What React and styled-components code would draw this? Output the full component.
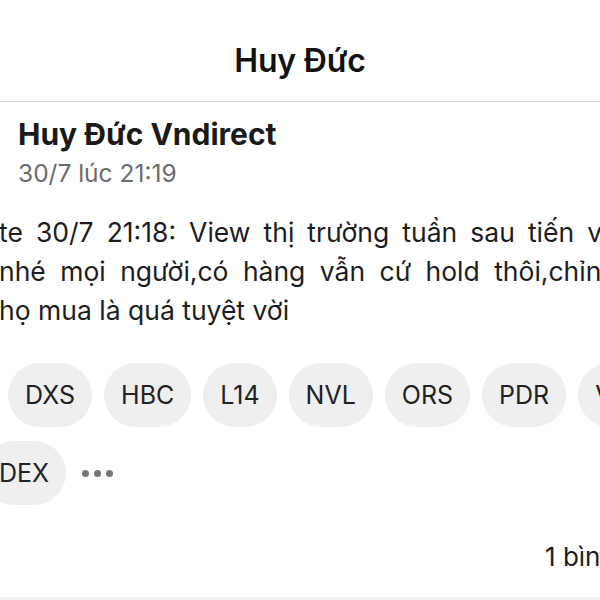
import React from 'react';
import styled, { createGlobalStyle } from 'styled-components';

const GlobalStyle = createGlobalStyle`
  html, body {
    margin: 0;
    padding: 0;
    background: #fff;
  }
  body {
    font-family: Inter, "Liberation Sans", Arial, sans-serif;
    color: #1d1d1f;
  }
`;

const Screen = styled.div`
  width: 600px;
  height: 600px;
  overflow: hidden;
  display: flex;
  flex-direction: column;
  background: #fff;
`;

const Header = styled.header`
  height: 81px;
  padding-top: 20px;
  flex-shrink: 0;
  display: flex;
  align-items: center;
  justify-content: center;
  border-bottom: 1px solid #d2d2d4;
`;

const Title = styled.h1`
  margin: 0;
  font-size: 32px;
  font-weight: 600;
  letter-spacing: -0.2px;
  color: #111;
`;

const Post = styled.article`
  display: flex;
  flex-direction: column;
`;

const Author = styled.div`
  margin: 15px 0 0 18px;
  font-size: 30px;
  line-height: 34px;
  font-weight: 700;
  color: #1a1a1a;
`;

const Time = styled.div`
  margin: 7px 0 0 18px;
  font-size: 24.5px;
  line-height: 30px;
  color: #6b6b6d;
`;

// justified paragraph, wider than the visible area
const Body = styled.div`
  width: 618px;
  margin: 25px 0 0 -1px;
  font-size: 26.5px;
  line-height: 39px;
  color: #1d1d1f;
`;

const Line = styled.div`
  white-space: nowrap;
  text-align: justify;
  text-align-last: ${(p) => (p.$last ? 'left' : 'justify')};
`;

const Tags = styled.div`
  margin-top: 33px;
  display: flex;
  flex-direction: column;
  gap: 14px;
`;

const TagRow = styled.div`
  display: flex;
  align-items: center;
  gap: 12px;
  margin-left: ${(p) => p.$indent}px;
  white-space: nowrap;
`;

const Tag = styled.span`
  flex-shrink: 0;
  height: 64px;
  padding: 0 17px;
  display: flex;
  align-items: center;
  border-radius: 32px;
  background: #efeff0;
  font-size: 25px;
  color: #222;
`;

const More = styled.span`
  display: flex;
  gap: 5px;
  margin-left: 4px;
`;

const Dot = styled.i`
  width: 7px;
  height: 7px;
  border-radius: 50%;
  background: #77777a;
`;

const Footer = styled.div`
  margin-top: 36px;
  padding-left: 545px;
  font-size: 26px;
  line-height: 32px;
  white-space: nowrap;
  color: #1d1d1f;
`;

const BottomBand = styled.div`
  margin-top: auto;
  height: 3px;
  background: #f2f2f3;
`;

const rowOne = ['DXS', 'HBC', 'L14', 'NVL', 'ORS', 'PDR', 'VHM'];

export default function App() {
  return (
    <>
      <GlobalStyle />
      <Screen>
        <Header>
          <Title>Huy Đức</Title>
        </Header>
        <Post>
          <Author>Huy Đức Vndirect</Author>
          <Time>30/7 lúc 21:19</Time>
          <Body>
            <Line>te 30/7 21:18: View thị trường tuần sau tiến về</Line>
            <Line>nhé mọi người,có hàng vẫn cứ hold thôi,chỉnh</Line>
            <Line $last>họ mua là quá tuyệt vời</Line>
          </Body>
          <Tags>
            <TagRow $indent={8}>
              {rowOne.map((t) => (
                <Tag key={t}>{t}</Tag>
              ))}
            </TagRow>
            <TagRow $indent={-18}>
              <Tag>DEX</Tag>
              <More>
                <Dot />
                <Dot />
                <Dot />
              </More>
            </TagRow>
          </Tags>
          <Footer>1 bình luận</Footer>
        </Post>
        <BottomBand />
      </Screen>
    </>
  );
}
